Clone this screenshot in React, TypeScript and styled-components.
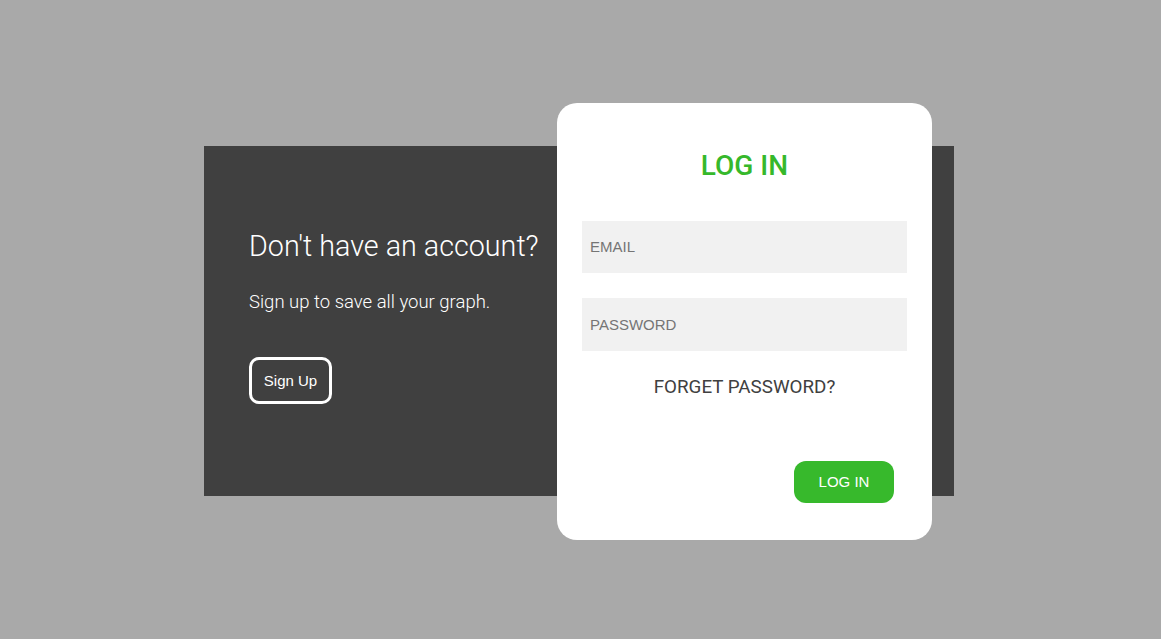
import React from "react";
import styled, { createGlobalStyle } from "styled-components";

const GlobalStyle = createGlobalStyle`
  html, body {
    margin: 0;
    padding: 0;
    background: #a9a9a9;
  }
  * {
    box-sizing: border-box;
  }
`;

const Page = styled.div`
  width: 1161px;
  height: 639px;
  padding: 146px 0 0 204px;
`;

const Panel = styled.div`
  width: 750px;
  height: 350px;
  background: #404040;
  display: flex;
  align-items: center;
`;

const Intro = styled.div`
  width: 353px;
  height: 100%;
  padding: 83px 0 0 45px;
  display: flex;
  flex-direction: column;
  align-items: flex-start;
  color: #ffffff;
  font-family: Roboto, "Liberation Sans", sans-serif;
`;

const Heading = styled.h2`
  margin: 0;
  font-size: 28.7px;
  line-height: 34px;
  font-weight: 300;
  white-space: nowrap;
`;

const Lead = styled.p`
  margin: 28px 0 0;
  font-size: 18.5px;
  line-height: 22px;
  font-weight: 300;
  white-space: nowrap;
`;

const OutlineButton = styled.button`
  margin-top: 44px;
  width: 83px;
  height: 47px;
  padding: 0;
  border: 3px solid #ffffff;
  border-radius: 10px;
  background: transparent;
  color: #ffffff;
  font-family: "Liberation Sans", Arial, sans-serif;
  font-size: 15px;
`;

const Card = styled.form`
  flex: none;
  width: 375px;
  height: 437px;
  background: #ffffff;
  border-radius: 20px;
  padding: 47px 25px 0;
  display: flex;
  flex-direction: column;
`;

const Title = styled.h1`
  margin: 0 0 39px;
  text-align: center;
  color: #36b82b;
  font-family: Roboto, "Liberation Sans", sans-serif;
  font-size: 28px;
  line-height: 32px;
  font-weight: 500;
`;

const Field = styled.input`
  width: 325px;
  height: 52px;
  border: none;
  outline: none;
  background: #f1f1f1;
  padding: 0 8px;
  font-family: "Liberation Sans", Arial, sans-serif;
  font-size: 15px;
  color: #333;
  & + & {
    margin-top: 25px;
    height: 53px;
  }
  &::placeholder {
    color: #757575;
  }
`;

const Forgot = styled.a`
  margin-top: 24px;
  text-align: center;
  color: #404040;
  font-family: Roboto, "Liberation Sans", sans-serif;
  font-size: 18.8px;
  line-height: 24px;
  cursor: pointer;
`;

const Actions = styled.div`
  margin-top: 62px;
  display: flex;
  justify-content: flex-end;
  padding-right: 13px;
`;

const SubmitButton = styled.button`
  width: 100px;
  height: 42px;
  border: none;
  border-radius: 12px;
  background: #37b92c;
  color: #ffffff;
  font-family: "Liberation Sans", Arial, sans-serif;
  font-size: 15px;
`;

const App = () => {
  return (
    <>
      <GlobalStyle />
      <Page>
        <Panel>
          <Intro>
            <Heading>Don't have an account?</Heading>
            <Lead>Sign up to save all your graph.</Lead>
            <OutlineButton type="button">Sign Up</OutlineButton>
          </Intro>
          <Card onSubmit={(e) => e.preventDefault()}>
            <Title>LOG IN</Title>
            <Field type="email" placeholder="EMAIL" />
            <Field type="password" placeholder="PASSWORD" />
            <Forgot>FORGET PASSWORD?</Forgot>
            <Actions>
              <SubmitButton type="submit">LOG IN</SubmitButton>
            </Actions>
          </Card>
        </Panel>
      </Page>
    </>
  );
};

export default App;
